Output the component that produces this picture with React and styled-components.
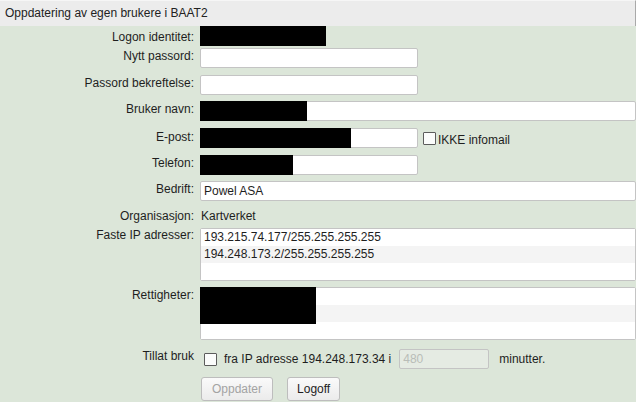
import React from "react";
import styled, { createGlobalStyle } from "styled-components";

const GlobalStyle = createGlobalStyle`
  html, body {
    margin: 0;
    padding: 0;
    background: #dce6d9;
  }
  * { box-sizing: border-box; }
`;

const Page = styled.div`
  font-family: "Liberation Sans", Arial, sans-serif;
  font-size: 12px;
  color: #1e1e1e;
  min-height: 100vh;
  background: #dce6d9;
  overflow: hidden;
`;

const Header = styled.div`
  height: 26px;
  line-height: 25px;
  padding-left: 5px;
  background: #ececec;
  border-top: 1px solid #f6f6f6;
  border-right: 1px solid #a9a9a9;
  color: #222;
`;

const Form = styled.div`
  display: flex;
  flex-direction: column;
`;

const Row = styled.div`
  display: grid;
  grid-template-columns: 194px 1fr;
  column-gap: 6px;
  margin-top: ${(p) => p.$top || 0}px;
`;

const Label = styled.div`
  text-align: right;
  white-space: nowrap;
  line-height: 14px;
  padding-top: ${(p) => p.$pt ?? 1}px;
`;

const Control = styled.div`
  display: flex;
  align-items: center;
  gap: ${(p) => p.$gap ?? 0}px;
  min-height: ${(p) => p.$h ?? 0}px;
`;

const InputWrap = styled.div`
  position: relative;
  width: ${(p) => p.$w}px;
  height: 20px;
  flex: none;
  margin-left: ${(p) => p.$ml ?? 0}px;
`;

const TextInput = styled.input`
  display: block;
  width: 100%;
  height: 100%;
  margin: 0;
  padding: 0 3px;
  border: 1px solid #c4c4c4;
  border-radius: 2px;
  background: ${(p) => (p.disabled ? "#e5ebe3" : "#fff")};
  color: ${(p) => (p.disabled ? "#b9bdb8" : "#1e1e1e")};
  font: inherit;
  outline: none;
`;

const Blackout = styled.span`
  display: block;
  width: ${(p) => p.$w}px;
  height: ${(p) => p.$h}px;
  background: #000;
`;

const Redaction = styled(Blackout)`
  position: absolute;
  left: ${(p) => p.$off ?? 0}px;
  top: ${(p) => p.$off ?? 0}px;
`;

const Check = styled.input.attrs({ type: "checkbox" })`
  appearance: none;
  -webkit-appearance: none;
  margin: 0 0 0 ${(p) => p.$ml ?? 0}px;
  width: 13px;
  height: 13px;
  border: 1px solid #5c5c5c;
  border-radius: 1px;
  background: #fbfcfb;
  flex: none;
`;

const Inline = styled.span`
  white-space: nowrap;
  line-height: 14px;
  margin-left: ${(p) => p.$ml ?? 0}px;
  padding-top: ${(p) => p.$pt ?? 0}px;
`;

const PlainText = styled.div`
  line-height: 14px;
  padding-top: 1px;
  padding-left: 1px;
`;

const ListBox = styled.div`
  position: relative;
  width: 436px;
  border: 1px solid #c4c4c4;
  border-radius: 2px;
  background: #fff;
`;

const ListItem = styled.div`
  height: 17px;
  line-height: 17px;
  padding-left: 3px;
  white-space: nowrap;
  background: ${(p) => (p.$alt ? "#f4f4f4" : "#fff")};
`;

const Buttons = styled.div`
  display: flex;
  gap: 14px;
  padding-left: 1px;
`;

const Button = styled.button`
  height: 24px;
  padding: 0 ${(p) => p.$px ?? 9}px;
  border: 1px solid #bdbdbd;
  border-radius: 3px;
  background: linear-gradient(#fafafa, #ebebeb);
  font: inherit;
  color: ${(p) => (p.disabled ? "#a3a3a3" : "#1e1e1e")};
  cursor: pointer;
`;

function RedactedInput({ w, black }) {
  return (
    <InputWrap $w={w}>
      <TextInput />
      {black ? <Redaction $w={black} $h={20} /> : null}
    </InputWrap>
  );
}

export default function App() {
  return (
    <Page>
      <GlobalStyle />
      <Header>Oppdatering av egen brukere i BAAT2</Header>
      <Form>
        <Row $top={0}>
          <Label $pt={4}>Logon identitet:</Label>
          <Control>
            <Blackout $w={126} $h={20} />
          </Control>
        </Row>
        <Row $top={2}>
          <Label>Nytt passord:</Label>
          <Control>
            <RedactedInput w={218} />
          </Control>
        </Row>
        <Row $top={7}>
          <Label>Passord bekreftelse:</Label>
          <Control>
            <RedactedInput w={218} />
          </Control>
        </Row>
        <Row $top={6}>
          <Label>Bruker navn:</Label>
          <Control>
            <RedactedInput w={436} black={107} />
          </Control>
        </Row>
        <Row $top={7}>
          <Label $pt={2}>E-post:</Label>
          <Control>
            <RedactedInput w={218} black={151} />
            <Check $ml={5} />
            <Inline $ml={2} $pt={3}>IKKE infomail</Inline>
          </Control>
        </Row>
        <Row $top={7}>
          <Label>Telefon:</Label>
          <Control>
            <RedactedInput w={218} black={93} />
          </Control>
        </Row>
        <Row $top={6}>
          <Label>Bedrift:</Label>
          <Control>
            <InputWrap $w={436}>
              <TextInput defaultValue="Powel ASA" />
            </InputWrap>
          </Control>
        </Row>
        <Row $top={7}>
          <Label>Organisasjon:</Label>
          <PlainText>Kartverket</PlainText>
        </Row>
        <Row $top={5}>
          <Label $pt={0}>Faste IP adresser:</Label>
          <Control>
            <ListBox>
              <ListItem>193.215.74.177/255.255.255.255</ListItem>
              <ListItem $alt>194.248.173.2/255.255.255.255</ListItem>
              <ListItem />
            </ListBox>
          </Control>
        </Row>
        <Row $top={6}>
          <Label $pt={1}>Rettigheter:</Label>
          <Control>
            <ListBox>
              <ListItem />
              <ListItem $alt />
              <ListItem />
              <Redaction $w={116} $h={37} $off={-1} />
            </ListBox>
          </Control>
        </Row>
        <Row $top={9}>
          <Label $pt={0}>Tillat bruk</Label>
          <Control $h={20}>
            <Check $ml={4} />
            <Inline $ml={7}>fra IP adresse 194.248.173.34 i</Inline>
            <InputWrap $w={90} $ml={8}>
              <TextInput disabled defaultValue="480" />
            </InputWrap>
            <Inline $ml={10}>minutter.</Inline>
          </Control>
        </Row>
        <Row $top={8}>
          <div />
          <Buttons>
            <Button disabled $px={10}>Oppdater</Button>
            <Button $px={9}>Logoff</Button>
          </Buttons>
        </Row>
      </Form>
    </Page>
  );
}
